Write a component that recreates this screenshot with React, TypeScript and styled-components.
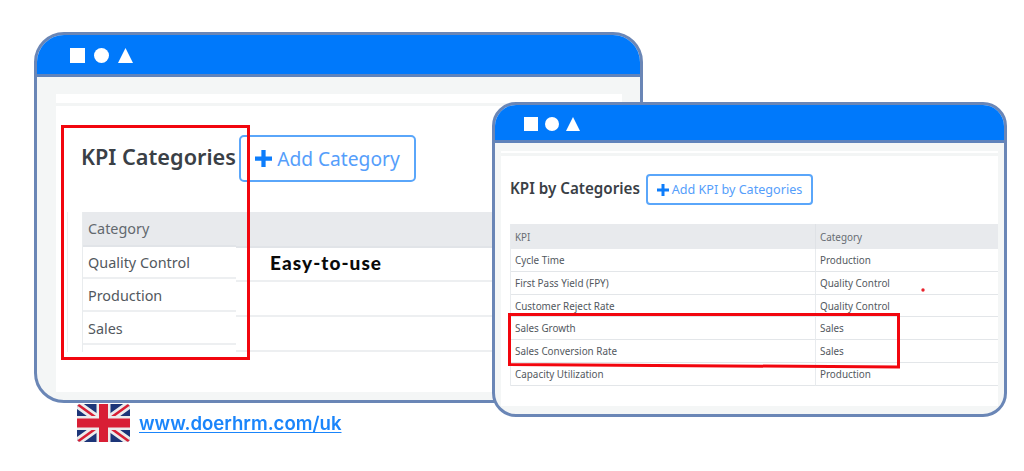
import React from "react";
import styled, { createGlobalStyle } from "styled-components";

const Global = createGlobalStyle`
  html, body { margin: 0; padding: 0; background: #fff; }
  body { font-family: "Noto Sans", "Open Sans", sans-serif; }
`;

const Desktop = styled.div`
  position: relative;
  width: 1024px;
  height: 471px;
  overflow: hidden;
  background: #fff;
`;

const Soft = styled.div`
  filter: blur(0.45px);
`;

const Window = styled.section<{ $x: number; $y: number; $w: number; $h: number; $r: number }>`
  position: absolute;
  left: ${(p) => p.$x}px;
  top: ${(p) => p.$y}px;
  width: ${(p) => p.$w}px;
  height: ${(p) => p.$h}px;
  box-sizing: border-box;
  display: flex;
  flex-direction: column;
  border: 3px solid #6a86b6;
  border-radius: ${(p) => p.$r}px;
  background: #f4f6f6;
  overflow: hidden;
`;

const TitleBar = styled.header<{ $h: number; $pad: number; $gap: number }>`
  flex: none;
  box-sizing: content-box;
  height: ${(p) => p.$h}px;
  display: flex;
  align-items: center;
  gap: ${(p) => p.$gap}px;
  padding: 2px 0 0 ${(p) => p.$pad}px;
  background: #0079fb;
  border-bottom: 3px solid #5f83bb;
`;

const Shape = styled.svg`
  display: block;
  fill: #fff;
`;

const Body = styled.div<{ $top: number; $side: number; $bottom: number; $rightSide?: number }>`
  flex: 1;
  min-height: 0;
  display: flex;
  padding: ${(p) => p.$top}px ${(p) => p.$rightSide ?? p.$side}px ${(p) => p.$bottom}px ${(p) => p.$side}px;
`;

const Sheet = styled.div`
  flex: 1;
  min-width: 0;
  display: flex;
  flex-direction: column;
  background: #fff;
`;

const Strip = styled.div<{ $h: number }>`
  flex: none;
  height: ${(p) => p.$h}px;
  border-bottom: 3px solid #f3f5f5;
`;

const Content = styled.div<{ $top: number; $left: number }>`
  padding: ${(p) => p.$top}px 0 0 ${(p) => p.$left}px;
`;

const Heading = styled.div<{ $gap: number; $mb: number }>`
  display: flex;
  align-items: center;
  gap: ${(p) => p.$gap}px;
  margin-bottom: ${(p) => p.$mb}px;
`;

const Title = styled.h2<{ $size: number; $lift: number }>`
  margin: 0;
  padding-bottom: ${(p) => p.$lift}px;
  font-size: ${(p) => p.$size}px;
  font-weight: 600;
  color: #3a4046;
  white-space: nowrap;
`;

const AddButton = styled.div<{ $w: number; $h: number; $size: number; $gap: number; $radius: number }>`
  box-sizing: border-box;
  flex: none;
  width: ${(p) => p.$w}px;
  height: ${(p) => p.$h}px;
  display: flex;
  align-items: center;
  justify-content: center;
  gap: ${(p) => p.$gap}px;
  border: 2px solid #5aa6fa;
  border-radius: ${(p) => p.$radius}px;
  font-size: ${(p) => p.$size}px;
  color: #559efb;
  white-space: nowrap;
`;

const Plus = styled.svg`
  display: block;
  flex: none;
  fill: #0d7dfb;
`;

const SplitTable = styled.div`
  display: flex;
  position: relative;
  margin-left: 1px;
`;

const SplitColumn = styled.div<{ $w?: number; $edge?: boolean }>`
  flex: ${(p) => (p.$w ? "none" : "1")};
  width: ${(p) => (p.$w ? `${p.$w}px` : "auto")};
  box-sizing: border-box;
  border-left: ${(p) => (p.$edge ? "1px solid #e9ecee" : "none")};
`;

const HeadCell = styled.div<{ $h: number }>`
  box-sizing: border-box;
  height: ${(p) => p.$h}px;
  display: flex;
  align-items: center;
  padding-left: 5px;
  background: #e8eaed;
  border-bottom: 2px solid #e1e4e8;
  font-size: 14.4px;
  color: #62686e;
`;

const Cell = styled.div<{ $h: number }>`
  box-sizing: border-box;
  height: ${(p) => p.$h}px;
  display: flex;
  align-items: center;
  padding: 1px 0 0 5px;
  border-bottom: 2px solid #edeff1;
  font-size: 14.4px;
  color: #52585e;
  white-space: nowrap;
`;

const GuideLine = styled.div`
  position: absolute;
  left: -15px;
  top: 0;
  bottom: 0;
  width: 1px;
  background: #eceeef;
`;

const EasyLabel = styled.div`
  position: absolute;
  left: 270px;
  top: 251px;
  font-family: Lato, sans-serif;
  font-size: 19px;
  line-height: 24px;
  font-weight: 900;
  letter-spacing: 1.05px;
  color: #0a0a0a;
`;

const GridTable = styled.div`
  display: grid;
  grid-template-columns: 305px 1fr;
  border-left: 1px solid #e8ebee;
`;

const GridHead = styled.div<{ $last?: boolean }>`
  box-sizing: border-box;
  height: 25.4px;
  display: flex;
  align-items: center;
  padding-left: 4px;
  background: #e8eaed;
  border-right: ${(p) => (p.$last ? "none" : "1px solid #dfe2e6")};
  font-size: 9.9px;
  color: #666c72;
`;

const GridCell = styled.div<{ $last?: boolean }>`
  box-sizing: border-box;
  height: 22.7px;
  display: flex;
  align-items: center;
  padding-left: 4px;
  border-bottom: 1px solid #e3e6e9;
  border-right: ${(p) => (p.$last ? "none" : "1px solid #e8ebee")};
  font-size: 9.9px;
  color: #52585e;
  white-space: nowrap;
`;

const RedBox = styled.div`
  position: absolute;
  left: 61px;
  top: 125px;
  width: 189px;
  height: 235px;
  box-sizing: border-box;
  border: 3px solid #f2060e;
`;

const Sketch = styled.svg`
  position: absolute;
  left: 0;
  top: 0;
  pointer-events: none;
`;

const Footer = styled.div`
  position: absolute;
  left: 77px;
  top: 404px;
  display: flex;
  align-items: center;
  gap: 9px;
`;

const Site = styled.a`
  font-family: Inter, sans-serif;
  font-size: 18.6px;
  font-weight: 600;
  color: #1a85fb;
  text-decoration: underline;
  text-underline-offset: 2px;
  white-space: nowrap;
`;

const Square = ({ s }: { s: number }) => (
  <Shape width={s} height={s} viewBox="0 0 10 10"><rect width="10" height="10" /></Shape>
);
const Circle = ({ s }: { s: number }) => (
  <Shape width={s} height={s} viewBox="0 0 10 10"><circle cx="5" cy="5" r="5" /></Shape>
);
const Triangle = ({ s }: { s: number }) => (
  <Shape width={s} height={s} viewBox="0 0 10 10"><polygon points="5,0 10,10 0,10" /></Shape>
);
const PlusIcon = ({ s }: { s: number }) => (
  <Plus width={s} height={s} viewBox="0 0 16 16"><path d="M6 0h4v6h6v4h-6v6H6v-6H0V6h6z" /></Plus>
);

const UkFlag = () => (
  <svg width="53" height="38" viewBox="0 0 53 38">
    <defs>
      <clipPath id="flag-clip"><rect width="53" height="38" rx="4" /></clipPath>
    </defs>
    <g clipPath="url(#flag-clip)">
      <rect width="53" height="38" fill="#1c3578" />
      <path d="M0 0L53 38M53 0L0 38" stroke="#ececec" strokeWidth="8" />
      <path d="M0 0L53 38M53 0L0 38" stroke="#d81f35" strokeWidth="2.6" />
      <path d="M26.5 0V38M0 19H53" stroke="#ececec" strokeWidth="14" />
      <path d="M26.5 0V38M0 19H53" stroke="#d81f35" strokeWidth="9" />
    </g>
  </svg>
);

const leftRows: [string, number][] = [["Quality Control", 32], ["Production", 33], ["Sales", 33]];
const rightRows = [34, 35, 34.5];
const kpis = [
  ["Cycle Time", "Production"],
  ["First Pass Yield (FPY)", "Quality Control"],
  ["Customer Reject Rate", "Quality Control"],
  ["Sales Growth", "Sales"],
  ["Sales Conversion Rate", "Sales"],
  ["Capacity Utilization", "Production"],
];

export default function App() {
  return (
    <Desktop>
      <Global />
      <Soft>
        <Window $x={34} $y={32} $w={609} $h={371} $r={30}>
          <TitleBar $h={37} $pad={33} $gap={9}>
            <Square s={15} />
            <Circle s={15} />
            <Triangle s={15} />
          </TitleBar>
          <Body $top={17} $side={19} $rightSide={18} $bottom={8}>
            <Sheet>
              <Strip $h={9} />
              <Content $top={29} $left={25}>
                <Heading $gap={3} $mb={30}>
                  <Title $size={21.7} $lift={4}>KPI Categories</Title>
                  <AddButton $w={177} $h={47} $size={19.2} $gap={5} $radius={5}>
                    <PlusIcon s={17} />
                    Add Category
                  </AddButton>
                </Heading>
                <SplitTable>
                  <GuideLine />
                  <SplitColumn $w={154} $edge>
                    <HeadCell $h={35}>Category</HeadCell>
                    {leftRows.map(([r, h]) => (
                      <Cell key={r} $h={h}>{r}</Cell>
                    ))}
                  </SplitColumn>
                  <SplitColumn>
                    <HeadCell $h={36} />
                    {rightRows.map((h) => (
                      <Cell key={h} $h={h} />
                    ))}
                  </SplitColumn>
                </SplitTable>
              </Content>
            </Sheet>
          </Body>
        </Window>
        <EasyLabel>Easy-to-use</EasyLabel>
        <RedBox />
        <Window $x={492} $y={102} $w={515} $h={315} $r={24}>
          <TitleBar $h={33} $pad={29} $gap={7}>
            <Square s={14} />
            <Circle s={14} />
            <Triangle s={14} />
          </TitleBar>
          <Body $top={8} $side={6} $bottom={8}>
            <Sheet>
              <Strip $h={2} />
              <Content $top={18} $left={9}>
                <Heading $gap={6} $mb={19}>
                  <Title $size={15.2} $lift={3}>KPI by Categories</Title>
                  <AddButton $w={167} $h={31} $size={12.6} $gap={3} $radius={4}>
                    <PlusIcon s={12} />
                    Add KPI by Categories
                  </AddButton>
                </Heading>
                <GridTable>
                  <GridHead>KPI</GridHead>
                  <GridHead $last>Category</GridHead>
                  {kpis.map(([k, c]) => (
                    <React.Fragment key={k}>
                      <GridCell>{k}</GridCell>
                      <GridCell $last>{c}</GridCell>
                    </React.Fragment>
                  ))}
                </GridTable>
              </Content>
            </Sheet>
          </Body>
        </Window>
        <Sketch width="1024" height="471" viewBox="0 0 1024 471">
          <path d="M509.5 314.5L898.5 314.5L898.5 367L509.5 364.5Z" fill="none" stroke="#f2060e" strokeWidth="3" />
          <circle cx="923" cy="290" r="1.7" fill="#e8222c" />
        </Sketch>
        <Footer>
          <UkFlag />
          <Site>www.doerhrm.com/uk</Site>
        </Footer>
      </Soft>
    </Desktop>
  );
}
